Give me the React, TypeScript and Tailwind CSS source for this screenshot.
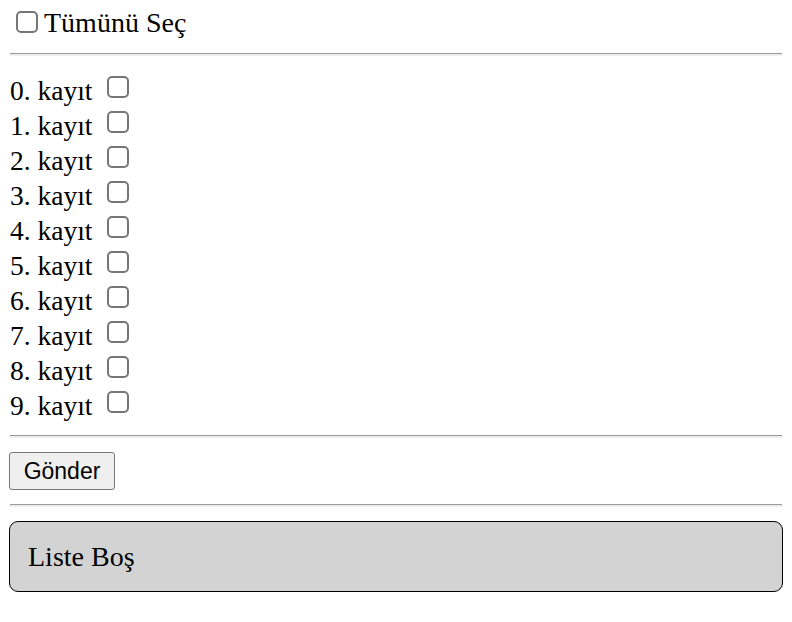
import { useState } from "react";

const Box = ({ checked, onChange }: { checked: boolean; onChange: () => void }) => (
  <input
    type="checkbox"
    checked={checked}
    onChange={onChange}
    className="appearance-none w-[22px] h-[22px] border-2 border-[#767676] rounded-[5px] bg-white checked:bg-[#0075ff] checked:border-[#0075ff]"
  />
);

const Rule = () => <div className="mx-[10px] h-0 border-t border-t-[#9a9a9a] border-b-2 border-b-[#eeeeee]" />;

const App = () => {
  const [selected, setSelected] = useState<boolean[]>(Array(10).fill(false));
  const [list, setList] = useState<number[]>([]);
  const allChecked = selected.every(Boolean);

  const toggle = (i: number) => setSelected((s) => s.map((v, j) => (j === i ? !v : v)));

  return (
    <div className="bg-white text-black min-h-[622px]" style={{ fontFamily: '"Liberation Serif", "Times New Roman", serif' }}>
      <div className="flex items-start gap-[6px] pl-[16px] pt-[9px] h-[52px] text-[28px] leading-[28px]">
        <span className="mt-[2px] flex">
          <Box checked={allChecked} onChange={() => setSelected(Array(10).fill(!allChecked))} />
        </span>
        <span>Tümünü Seç</span>
      </div>
      <div className="pt-px">
        <Rule />
      </div>
      <div className="pt-[17px] pb-[12px] pl-[10px] text-[27.5px] leading-[35px]">
        {selected.map((v, i) => (
          <div key={i} className="flex items-start h-[35px]">
            <span>{i}. kayıt</span>
            <span className="ml-[14px] mt-[3px] flex">
              <Box checked={v} onChange={() => toggle(i)} />
            </span>
          </div>
        ))}
      </div>
      <Rule />
      <div className="py-[14px] pl-[9px]">
        <button
          onClick={() => setList(selected.flatMap((v, i) => (v ? [i] : [])))}
          className="w-[106px] h-[38px] bg-[#efefef] border border-[#767676] rounded-[3px] text-[23px] leading-[26px]"
          style={{ fontFamily: '"Liberation Sans", Arial, sans-serif' }}
        >
          Gönder
        </button>
      </div>
      <Rule />
      <div className="pt-[14px] px-[9px]">
        <div className="h-[71px] border border-black rounded-[9px] bg-[#d3d3d3] flex items-center pl-[18px] text-[28px] leading-[28px]">
          {list.length === 0 ? "Liste Boş" : list.map((i) => `${i}. kayıt`).join(", ")}
        </div>
      </div>
    </div>
  );
};

export default App;
